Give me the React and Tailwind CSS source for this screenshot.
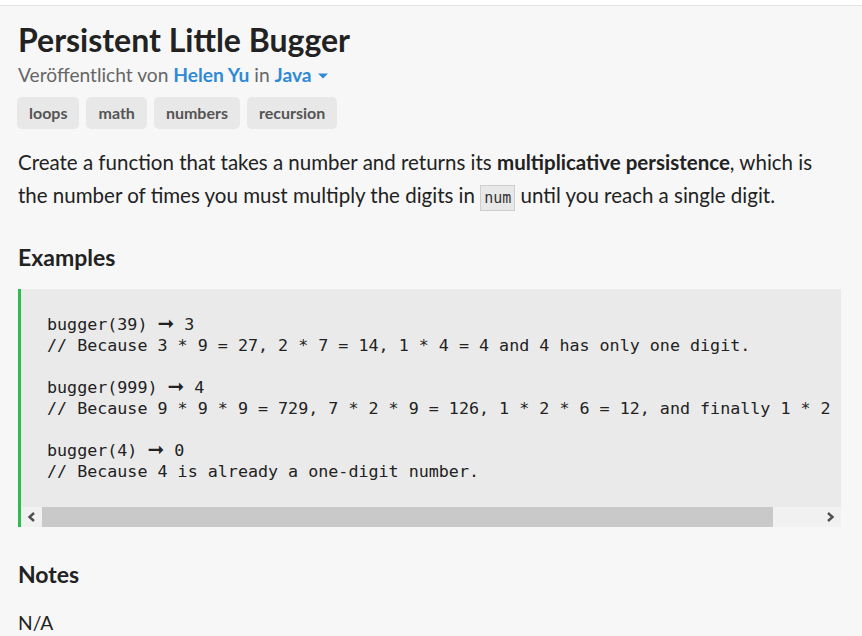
import React from "react";

const tags = ["loops", "math", "numbers", "recursion"];

const codeLines = [
  ["bugger(39) ", " 3"],
  ["// Because 3 * 9 = 27, 2 * 7 = 14, 1 * 4 = 4 and 4 has only one digit."],
  [""],
  ["bugger(999) ", " 4"],
  ["// Because 9 * 9 * 9 = 729, 7 * 2 * 9 = 126, 1 * 2 * 6 = 12, and finally 1 * 2 = 2."],
  [""],
  ["bugger(4) ", " 0"],
  ["// Because 4 is already a one-digit number."],
];

export default function App() {
  return (
    <div className="min-h-screen bg-[#f7f7f7] font-['Lato','Noto_Sans',sans-serif] text-[#222]">
      {/* top strip */}
      <div className="h-[6px] bg-white border-b border-[#e0e0e0]" />

      <div className="pl-[18px] pr-[21px]">
        {/* Header */}
        <h1 className="mt-[15px] text-[32px] leading-[38px] font-bold text-[#222]">
          Persistent Little Bugger
        </h1>
        <div className="mt-[4px] flex items-center text-[19.2px] leading-[24px] text-[#666]">
          <span>
            Veröffentlicht von{" "}
            <span className="font-bold text-[#2f8ad6]">Helen Yu</span> in{" "}
            <span className="font-bold text-[#2f8ad6]">Java</span>
          </span>
          <svg width="12" height="8" viewBox="0 0 12 8" className="ml-[5px] mt-[1px]">
            <path d="M1 1.5 L11 1.5 L6 6.5 Z" fill="#2f8ad6" />
          </svg>
        </div>

        {/* Tags */}
        <div className="mt-[10px] -ml-px flex gap-[7px]">
          {tags.map((t) => (
            <span
              key={t}
              className="h-[32px] px-[12px] flex items-center rounded-[5px] bg-[#e8e8e8] text-[16px] font-bold text-[#555]"
            >
              {t}
            </span>
          ))}
        </div>

        {/* Description */}
        <p className="mt-[17px] text-[20.5px] leading-[33px] text-[#222]">
          Create a function that takes a number and returns its{" "}
          <b className="font-bold">multiplicative persistence</b>, which is the
          number of times you must multiply the digits in{" "}
          <code className="px-[3px] py-[3px] bg-[#e8e8e8] border border-[#cfcfcf] font-['DejaVu_Sans_Mono',monospace] text-[15px] text-[#333]">
            num
          </code>{" "}
          until you reach a single digit.
        </p>

        {/* Examples */}
        <h2 className="mt-[28px] text-[23px] leading-[28px] font-bold">Examples</h2>
        <div className="mt-[18px] flex flex-col border-l-[3px] border-[#2dbd4e] bg-[#eaeaea]">
          <pre className="overflow-hidden pl-[26px] pt-[25px] pb-[25px] font-['DejaVu_Sans_Mono',monospace] text-[16.7px] leading-[21px] text-[#222] whitespace-pre">
            {codeLines.map((l, i) => (
              <div key={i} className="h-[21px]">
                {l[0]}
                {l.length > 1 && (
                  <>
                    <span className="font-['DejaVu_Sans',sans-serif] font-bold text-[20px] leading-[0]">➞</span>
                    {l[1]}
                  </>
                )}
              </div>
            ))}
          </pre>
          {/* scrollbar */}
          <div className="h-[20px] flex bg-[#f1f1f1]">
            <div className="w-[21px] flex items-center justify-center">
              <svg width="9" height="10" viewBox="0 0 9 10">
                <path d="M7 1 L2.5 5 L7 9" fill="none" stroke="#505050" strokeWidth="2.4" />
              </svg>
            </div>
            <div className="w-[731px] bg-[#c9c9c9]" />
            <div className="flex-1 flex items-center justify-end pr-[6px]">
              <svg width="9" height="10" viewBox="0 0 9 10">
                <path d="M2 1 L6.5 5 L2 9" fill="none" stroke="#505050" strokeWidth="2.4" />
              </svg>
            </div>
          </div>
        </div>

        {/* Notes */}
        <h2 className="mt-[33px] text-[23px] leading-[28px] font-bold">Notes</h2>
        <p className="mt-[23px] text-[19.2px] leading-[24px]">N/A</p>
      </div>
    </div>
  );
}
